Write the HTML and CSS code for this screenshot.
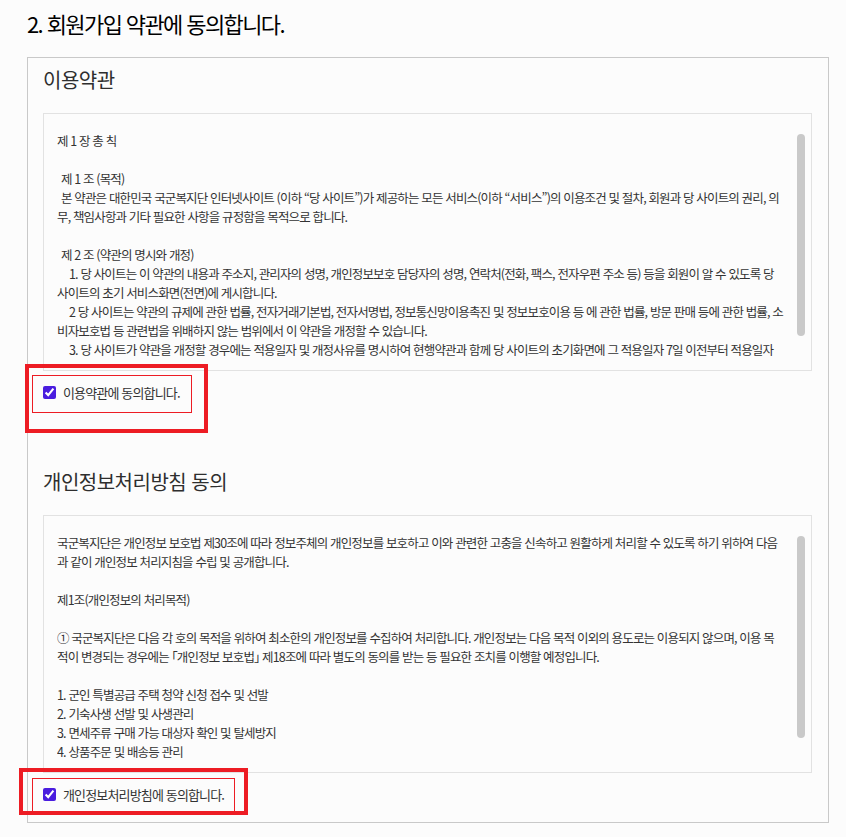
FILE: index.html
```html
<!DOCTYPE html>
<html lang="ko">
<head>
<meta charset="utf-8">
<title>회원가입 약관 동의</title>
<link rel="stylesheet" href="styles.css">
</head>
<body>
<div class="page">
  <h2 class="page-title">2. 회원가입 약관에 동의합니다.</h2>
  <div class="agree-panel">
    <section class="terms">
      <h3 class="terms-title">이용약관</h3>
      <div class="terms-box">
        <div class="terms-text">
          <p class="gap">제 1 장 총 칙</p>
          <p class="ind1">제 1 조 (목적)</p>
          <p class="ind1 gap">본 약관은 대한민국 국군복지단 인터넷사이트 (이하 “당 사이트”)가 제공하는 모든 서비스(이하 “서비스”)의 이용조건 및 절차, 회원과 당 사이트의 권리, 의<br>무, 책임사항과 기타 필요한 사항을 규정함을 목적으로 합니다.</p>
          <p class="ind1">제 2 조 (약관의 명시와 개정)</p>
          <p class="ind2">1. 당 사이트는 이 약관의 내용과 주소지, 관리자의 성명, 개인정보보호 담당자의 성명, 연락처(전화, 팩스, 전자우편 주소 등) 등을 회원이 알 수 있도록 당<br>사이트의 초기 서비스화면(전면)에 게시합니다.</p>
          <p class="ind2">2 당 사이트는 약관의 규제에 관한 법률, 전자거래기본법, 전자서명법, 정보통신망이용촉진 및 정보보호이용 등 에 관한 법률, 방문 판매 등에 관한 법률, 소<br>비자보호법 등 관련법을 위배하지 않는 범위에서 이 약관을 개정할 수 있습니다.</p>
          <p class="ind2">3. 당 사이트가 약관을 개정할 경우에는 적용일자 및 개정사유를 명시하여 현행약관과 함께 당 사이트의 초기화면에 그 적용일자 7일 이전부터 적용일자</p>
        </div>
        <div class="scrollbar" aria-hidden="true"><div class="scroll-thumb"></div></div>
      </div>
      <div class="agree agree-1">
        <input type="checkbox" id="agree-terms" checked>
        <label for="agree-terms">이용약관에 동의합니다.</label>
      </div>
    </section>

    <section class="terms">
      <h3 class="terms-title">개인정보처리방침 동의</h3>
      <div class="terms-box">
        <div class="terms-text">
          <p class="gap">국군복지단은 개인정보 보호법 제30조에 따라 정보주체의 개인정보를 보호하고 이와 관련한 고충을 신속하고 원활하게 처리할 수 있도록 하기 위하여 다음<br>과 같이 개인정보 처리지침을 수립 및 공개합니다.</p>
          <p class="gap">제1조(개인정보의 처리목적)</p>
          <p class="gap">① 국군복지단은 다음 각 호의 목적을 위하여 최소한의 개인정보를 수집하여 처리합니다. 개인정보는 다음 목적 이외의 용도로는 이용되지 않으며, 이용 목<br>적이 변경되는 경우에는 「개인정보 보호법」 제18조에 따라 별도의 동의를 받는 등 필요한 조치를 이행할 예정입니다.</p>
          <p>1. 군인 특별공급 주택 청약 신청 접수 및 선발</p>
          <p>2. 기숙사생 선발 및 사생관리</p>
          <p>3. 면세주류 구매 가능 대상자 확인 및 탈세방지</p>
          <p>4. 상품주문 및 배송등 관리</p>
        </div>
        <div class="scrollbar" aria-hidden="true"><div class="scroll-thumb"></div></div>
      </div>
      <div class="agree agree-2">
        <input type="checkbox" id="agree-privacy" checked>
        <label for="agree-privacy">개인정보처리방침에 동의합니다.</label>
      </div>
    </section>
  </div>
</div>
</body>
</html>
```

FILE: styles.css
```css
* {
  box-sizing: border-box;
}

body {
  margin: 0;
  background: #fcfcfc;
  font-family: "Noto Sans CJK KR", "Noto Sans", sans-serif;
  color: #333;
}

.page {
  padding: 8px 17px 0 27px;
}

.page-title {
  margin: 0;
  font-size: 22px;
  line-height: 30px;
  font-weight: 400;
  letter-spacing: -1.6px;
  color: #000;
}

.agree-panel {
  margin-top: 19px;
  border: 1px solid #c9c9c9;
  padding: 8px 16px 10px 15px;
}

.terms + .terms {
  margin-top: 58px;
}

.terms-title {
  margin: 0;
  font-size: 20px;
  line-height: 28px;
  font-weight: 400;
  letter-spacing: -0.5px;
  color: #2e2e2e;
}

.terms-box {
  margin-top: 19px;
  border: 1px solid #e2e2e2;
  padding: 17px 6px 11px 13px;
  display: flex;
  gap: 6px;
}

.terms-text {
  flex: 1;
  min-width: 0;
  height: 228px;
  overflow: hidden;
  font-size: 12.5px;
  line-height: 19px;
  letter-spacing: -0.85px;
  color: #333;
  font-feature-settings: "halt";
}

.terms-text p {
  margin: 0;
  white-space: nowrap;
}

.terms-text p.gap {
  margin-bottom: 19px;
}

.terms-text p.ind1 {
  text-indent: 4px;
}

.terms-text p.ind2 {
  text-indent: 12px;
}

.scrollbar {
  flex: none;
  width: 8px;
  padding-top: 3px;
}

.scroll-thumb {
  height: 202px;
  border-radius: 4px;
  background: #c9c9c9;
}

.agree {
  position: relative;
  margin-top: 4px;
  height: 35px;
  display: flex;
  align-items: center;
}

.agree input {
  margin: 0;
  width: 13px;
  height: 13px;
  accent-color: #4a1ddf;
}

.agree label {
  margin-left: 7px;
  font-size: 13px;
  letter-spacing: -0.85px;
  color: #333;
}

/* red highlight annotations over the agreement rows */
.agree::before,
.agree::after {
  content: "";
  position: absolute;
  pointer-events: none;
}

.agree-1::before {
  left: -11px;
  top: 0;
  width: 158px;
  height: 36px;
  border: 1px solid #ed1c24;
}

.agree-1::after {
  left: -18px;
  top: -11px;
  width: 175px;
  height: 61px;
  border: 4px solid #ed1c24;
}

.agree-2::before {
  left: -11px;
  top: 1px;
  width: 201px;
  height: 34px;
  border: 1px solid #ed1c24;
}

.agree-2::after {
  left: -24px;
  top: -9px;
  width: 221px;
  height: 39px;
  border: 4px solid #ed1c24;
}
```
